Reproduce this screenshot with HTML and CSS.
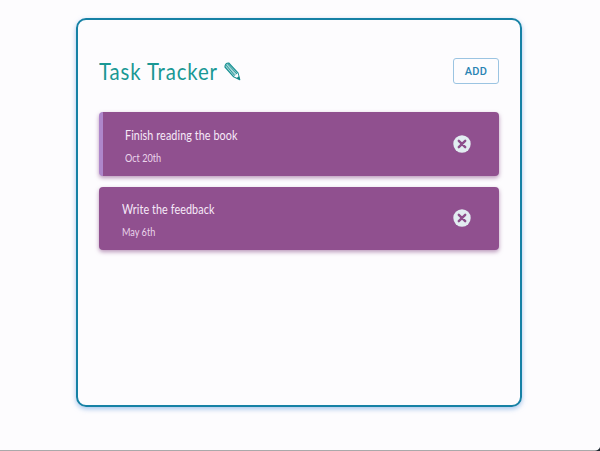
FILE: index.html
```html
<!DOCTYPE html>
<html lang="en">
<head>
<meta charset="utf-8">
<title>Task Tracker</title>
<link rel="stylesheet" href="styles.css">
</head>
<body>
<main class="tracker">
  <header class="header">
    <h1 class="title"><span class="title-text">Task Tracker</span>
      <svg class="pencil" width="17" height="19" viewBox="0 0 18 19" preserveAspectRatio="none">
        <path d="M1 5 Q1 1.2 5 1 L14.8 10.8 L16.7 17.6 L10.2 14.8Z" fill="#a5d5d6" stroke="#169092" stroke-width="1.2" stroke-linejoin="round"/>
        <path d="M2.3 3.2 L11.4 13.6 M4 2 L13.8 12" stroke="#169092" stroke-width=".9"/>
        <path d="M10.7 14.4 L14.5 11.2 L15.4 14.4 L13.2 15.5Z" fill="#fdfcfe"/>
        <path d="M16.8 17.8 L15.9 14.3 L13.4 16.3Z" fill="#168485"/>
      </svg>
    </h1>
    <button class="add">ADD</button>
  </header>
  <section class="task reminder">
    <div class="details"><h2 class="name">Finish reading the book</h2><p class="date">Oct 20th</p></div>
    <svg class="remove" width="18" height="18" viewBox="0 0 18 18"><circle cx="9" cy="9" r="8.7" fill="#e2edf1"/><path d="M5.8 5.8 L12.2 12.2 M12.2 5.8 L5.8 12.2" stroke="#8c4e8b" stroke-width="2.4" stroke-linecap="round"/></svg>
  </section>
  <section class="task">
    <div class="details"><h2 class="name">Write the feedback</h2><p class="date">May 6th</p></div>
    <svg class="remove" width="18" height="18" viewBox="0 0 18 18"><circle cx="9" cy="9" r="8.7" fill="#e2edf1"/><path d="M5.8 5.8 L12.2 12.2 M12.2 5.8 L5.8 12.2" stroke="#8c4e8b" stroke-width="2.4" stroke-linecap="round"/></svg>
  </section>
</main>
<footer class="edge"><svg class="corner" width="5" height="4" viewBox="0 0 5 4"><path d="M5 0V4H0Q4 3 5 0Z" fill="#1c2730"/></svg></footer>
</body>
</html>
```
FILE: styles.css
```css
* { box-sizing: border-box; margin: 0; }
body {
  height: 451px;
  padding-top: 18px;
  overflow: hidden;
  background: #fdfcfe;
  font-family: Lato, "Open Sans", sans-serif;
  display: flex;
  flex-direction: column;
}
.tracker {
  width: 446px;
  height: 389px;
  margin-left: 76px;
  padding: 38px 21px 0;
  border: 2px solid #1681a5;
  border-radius: 10px;
  box-shadow: 0 2px 5px #6ca0df99;
}
.header {
  display: flex;
  align-items: center;
  justify-content: space-between;
  height: 26px;
  margin-bottom: 28px;
}
.title { display: flex; align-items: center; gap: 7px; }
.title-text {
  width: 118px;
  font-size: 24px;
  font-weight: 400;
  line-height: 28px;
  letter-spacing: 1px;
  white-space: nowrap;
  color: #199894;
  transform: scaleX(0.85);
  transform-origin: left;
}
.add {
  width: 46px;
  height: 26px;
  padding: 0;
  border: 1px solid #9bc4e2;
  border-radius: 3px;
  background: transparent;
  color: #2983b3;
  font: 500 11px Roboto, sans-serif;
  letter-spacing: 0.3px;
}
.task {
  display: flex;
  align-items: center;
  justify-content: space-between;
  width: 400px;
  height: 63px;
  margin-bottom: 11px;
  padding: 0 28px 1px 23px;
  border-radius: 4px;
  background: #90508f;
  color: #f6e9f8;
  box-shadow: 0 2px 4px #80407f88;
}
.reminder { height: 64px; padding: 0 28px 0 22px; border-left: 4px solid #ae86cb; }
.details { padding-top: 2px; }
.name, .date { white-space: nowrap; transform: scaleX(0.83); transform-origin: left; }
.name { font-size: 13px; font-weight: 400; line-height: 16px; letter-spacing: 0.1px; }
.date { margin-top: 8px; font-size: 11px; line-height: 13px; color: #ead5eb; }
.edge { display: flex; align-items: flex-end; justify-content: flex-end; height: 4px; margin-top: auto; border-bottom: 1px solid #aaa9aa; }
.corner { display: block; margin-bottom: -1px; }
```
